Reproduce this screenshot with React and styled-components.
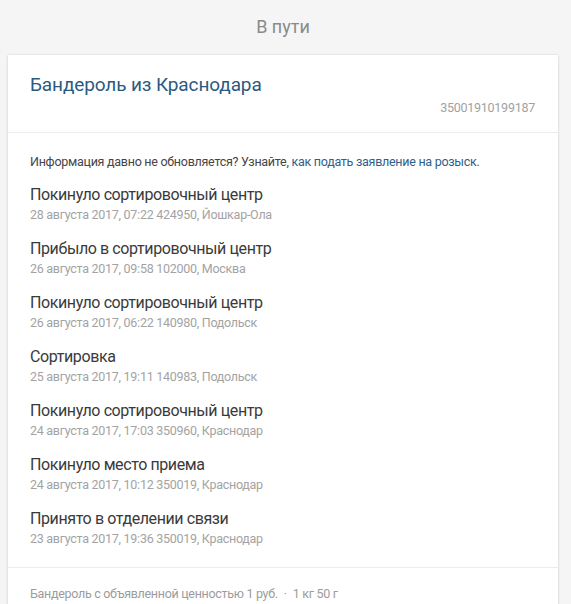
import React from "react";
import styled, { createGlobalStyle } from "styled-components";

const Global = createGlobalStyle`
  html, body { margin: 0; padding: 0; background: #f5f5f5; }
  body { font-family: Roboto, "Noto Sans", "Liberation Sans", sans-serif; -webkit-font-smoothing: antialiased; }
`;

const Page = styled.div`
  display: flex;
  flex-direction: column;
  padding: 0 13px 0 8px;
`;

const Status = styled.h1`
  margin: 0;
  padding: 16px 0 17px;
  font-size: 18px;
  line-height: 22px;
  font-weight: 400;
  color: #8a8a8a;
  text-align: center;
`;

const Card = styled.section`
  background: #fff;
  box-shadow: 0 0 2px rgba(0, 0, 0, 0.12), 0 1px 3px rgba(0, 0, 0, 0.08);
  display: flex;
  flex-direction: column;
`;

const CardHead = styled.header`
  display: flex;
  flex-direction: column;
  padding: 18px 23px 16px 22px;
  border-bottom: 1px solid #ececec;
`;

const Title = styled.h2`
  margin: 0;
  font-size: 19px;
  line-height: 24px;
  font-weight: 400;
  letter-spacing: -0.12px;
  color: #2c5a7f;
`;

const Barcode = styled.div`
  align-self: flex-end;
  margin-top: 3px;
  font-size: 12.5px;
  line-height: 16px;
  letter-spacing: -0.25px;
  color: #a2a2a2;
`;

const CardBody = styled.div`
  display: flex;
  flex-direction: column;
  padding: 20px 22px 19px;
  border-bottom: 1px solid #ececec;
`;

const Notice = styled.p`
  margin: 0 0 13px;
  font-size: 12.5px;
  line-height: 18px;
  letter-spacing: -0.27px;
  color: #454545;
`;

const Link = styled.a`
  color: #2d6189;
  text-decoration: none;
`;

const Events = styled.ul`
  list-style: none;
  margin: 0;
  padding: 0;
  display: flex;
  flex-direction: column;
  gap: 14px;
`;

const Event = styled.li`
  display: flex;
  flex-direction: column;
`;

const EventName = styled.div`
  font-size: 16px;
  line-height: 22px;
  letter-spacing: -0.4px;
  color: #3a3a3a;
`;

const EventMeta = styled.div`
  font-size: 12.5px;
  line-height: 18px;
  letter-spacing: -0.27px;
  color: #a3a3a3;
`;

const Footer = styled.footer`
  padding: 17px 22px 20px;
  font-size: 12.5px;
  line-height: 18px;
  letter-spacing: -0.3px;
  color: #9c9c9c;
`;

const Dot = styled.span`
  margin: 0 6px;
`;

const events = [
  ["Покинуло сортировочный центр", "28 августа 2017, 07:22 424950, Йошкар-Ола"],
  ["Прибыло в сортировочный центр", "26 августа 2017, 09:58 102000, Москва"],
  ["Покинуло сортировочный центр", "26 августа 2017, 06:22 140980, Подольск"],
  ["Сортировка", "25 августа 2017, 19:11 140983, Подольск"],
  ["Покинуло сортировочный центр", "24 августа 2017, 17:03 350960, Краснодар"],
  ["Покинуло место приема", "24 августа 2017, 10:12 350019, Краснодар"],
  ["Принято в отделении связи", "23 августа 2017, 19:36 350019, Краснодар"],
];

export default function App() {
  return (
    <Page>
      <Global />
      <Status>В пути</Status>
      <Card>
        <CardHead>
          <Title>Бандероль из Краснодара</Title>
          <Barcode>35001910199187</Barcode>
        </CardHead>
        <CardBody>
          <Notice>
            Информация давно не обновляется? Узнайте,{" "}
            <Link href="#">как подать заявление на розыск.</Link>
          </Notice>
          <Events>
            {events.map(([name, meta], i) => (
              <Event key={i}>
                <EventName>{name}</EventName>
                <EventMeta>{meta}</EventMeta>
              </Event>
            ))}
          </Events>
        </CardBody>
        <Footer>
          Бандероль с объявленной ценностью 1 руб.<Dot>·</Dot>1 кг 50 г
        </Footer>
      </Card>
    </Page>
  );
}
